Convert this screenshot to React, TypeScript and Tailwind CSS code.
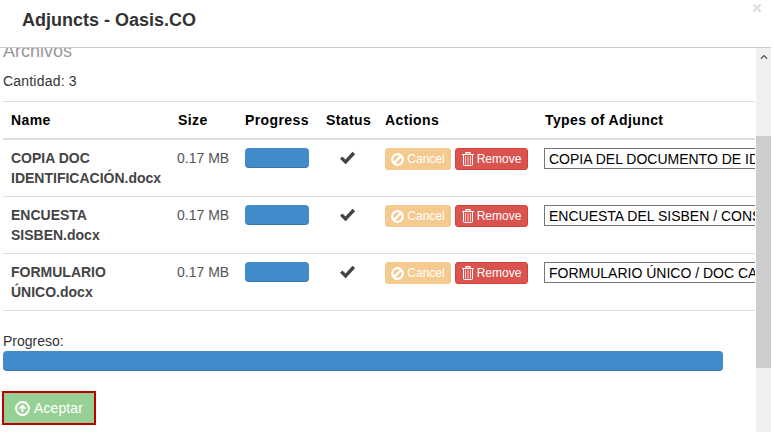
import { FaChevronUp, FaTimes } from "react-icons/fa";

const files = [
  { name: ["COPIA DOC", "IDENTIFICACIÓN.docx"], type: "COPIA DEL DOCUMENTO DE IDENTIDAD" },
  { name: ["ENCUESTA", "SISBEN.docx"], type: "ENCUESTA DEL SISBEN / CONSTANCIA" },
  { name: ["FORMULARIO", "ÚNICO.docx"], type: "FORMULARIO ÚNICO / DOC CARGADO" },
];

const columns = ["Name", "Size", "Progress", "Status", "Actions", "Types of Adjunct"];

function TrashIcon() {
  return (
    <svg width="12" height="14" viewBox="0 0 12 14" fill="none" stroke="currentColor" aria-hidden="true">
      <path d="M0 2.5h12M4 2.5V.7h4v1.8" strokeWidth="1.2" />
      <path d="M1.5 3v9.6a.9.9 0 0 0 .9.9h7.2a.9.9 0 0 0 .9-.9V3" strokeWidth="1" />
      <path d="M3.5 4v8.5M6 4v8.5M8.5 4v8.5" strokeWidth="1" strokeOpacity="0.75" />
    </svg>
  );
}

function BanIcon() {
  return (
    <svg width="13" height="13" viewBox="0 0 13 13" fill="none" stroke="currentColor" strokeWidth="2.2" aria-hidden="true">
      <circle cx="6.5" cy="6.5" r="5.3" />
      <path d="M2.9 10.1l7.2-7.2" />
    </svg>
  );
}

function CheckIcon() {
  return (
    <svg width="15" height="13" viewBox="0 0 15 13" fill="none" stroke="currentColor" strokeWidth="3.4" aria-hidden="true">
      <path d="M1.2 6.6l4.4 4.3L13.8 2" />
    </svg>
  );
}

function UploadIcon() {
  return (
    <svg width="15" height="15" viewBox="0 0 15 15" fill="none" stroke="currentColor" aria-hidden="true">
      <circle cx="7.5" cy="7.5" r="6.4" strokeWidth="2" />
      <path d="M4.5 7.6l3-3 3 3M7.5 5v6" strokeWidth="2" />
    </svg>
  );
}

function FileRow({ name, type }: { name: string[]; type: string }) {
  const cell = "h-[57px] border-b border-[#ddd] pt-[8px] align-top";
  return (
    <tr>
      <td className={`${cell} pl-[8px] leading-[20px] font-bold text-[#444]`}>
        {name[0]}
        <br />
        {name[1]}
      </td>
      <td className={`${cell} pl-[7px] leading-[20px] text-[#555]`}>0.17 MB</td>
      <td className={`${cell} pl-[8px]`}>
        <div className="h-[20px] w-[64px] rounded-[4px] bg-[#428bca] shadow-[inset_0_-1px_0_rgba(0,0,0,0.15)]" />
      </td>
      <td className={`${cell} pl-[8px]`}>
        <div className="flex w-[43px] justify-center pt-[3px] text-[#444]">
          <CheckIcon />
        </div>
      </td>
      <td className={`${cell} pl-[8px]`}>
        <div className="flex gap-[4px]">
          <button
            type="button"
            className="flex h-[22px] w-[66px] items-center justify-center gap-[3px] rounded-[3px] border border-[#f3cb91] bg-[#f5ca8f] text-[12px] text-white"
          >
            <BanIcon />
            Cancel
          </button>
          <button
            type="button"
            className="flex h-[22px] w-[73px] items-center justify-center gap-[3px] rounded-[3px] border border-[#d43f3a] bg-[#d9534f] text-[12px] text-white"
          >
            <TrashIcon />
            Remove
          </button>
        </div>
      </td>
      <td className={`${cell} overflow-hidden pl-[7px]`}>
        <div className="h-[21px] w-[260px] overflow-hidden border border-[#767676] pl-[4px] leading-[20px] whitespace-nowrap text-black">
          {type}
        </div>
      </td>
    </tr>
  );
}

export default function App() {
  return (
    <div className="relative h-[432px] w-[773px] overflow-hidden bg-white font-['Liberation_Sans',Arial,sans-serif] text-[14px] text-[#333]">
      <header className="h-[48px] w-[771px] border-b border-[#ccc] pt-[8px] pl-[22px]">
        <h1 className="text-[18px] leading-[24px] font-bold text-[#333]">Adjuncts - Oasis.CO</h1>
      </header>
      <FaTimes size={12} className="absolute top-[2px] left-[751px] text-[#ddd]" />

      <div className="flex h-[384px] w-[771px]">
        <div className="w-[756px] overflow-hidden pl-[3px]">
          <h2 className="-mt-[7px] text-[18px] leading-[20px] text-[#999]">Archivos</h2>
          <p className="mt-[10px] h-[21px] leading-[20px] tracking-[0.2px]">Cantidad: 3</p>
          <table className="mt-[9px] w-[752px] table-fixed border-separate border-spacing-0">
            <colgroup>
              <col className="w-[167px]" />
              <col className="w-[67px]" />
              <col className="w-[81px]" />
              <col className="w-[59px]" />
              <col className="w-[160px]" />
              <col className="w-[218px]" />
            </colgroup>
            <thead>
              <tr>
                {columns.map((c) => (
                  <th
                    key={c}
                    className="h-[39px] border-t border-b-2 border-[#ddd] pl-[8px] text-left font-bold tracking-[0.4px] text-black"
                  >
                    {c}
                  </th>
                ))}
              </tr>
            </thead>
            <tbody>
              {files.map((f) => (
                <FileRow key={f.type} name={f.name} type={f.type} />
              ))}
            </tbody>
          </table>
          <p className="mt-[20px] leading-[20px]">Progreso:</p>
          <div className="h-[20px] w-[720px] rounded-[4px] bg-[#428bca] shadow-[inset_0_-1px_0_rgba(0,0,0,0.15)]" />
          <button
            type="button"
            className="mt-[20px] -ml-[1px] flex h-[34px] w-[94px] items-center justify-center gap-[4px] border-2 border-[#c00000] bg-[#97d095] tracking-[0.1px] text-white"
          >
            <UploadIcon />
            Aceptar
          </button>
        </div>
        <div className="flex w-[15px] flex-col bg-[#f0f0f0]">
          <div className="flex h-[17px] items-center justify-center text-[#555]">
            <FaChevronUp size={8} />
          </div>
          <div className="mt-[71px] h-[232px] bg-[#cdcdcd]" />
        </div>
      </div>
    </div>
  );
}
